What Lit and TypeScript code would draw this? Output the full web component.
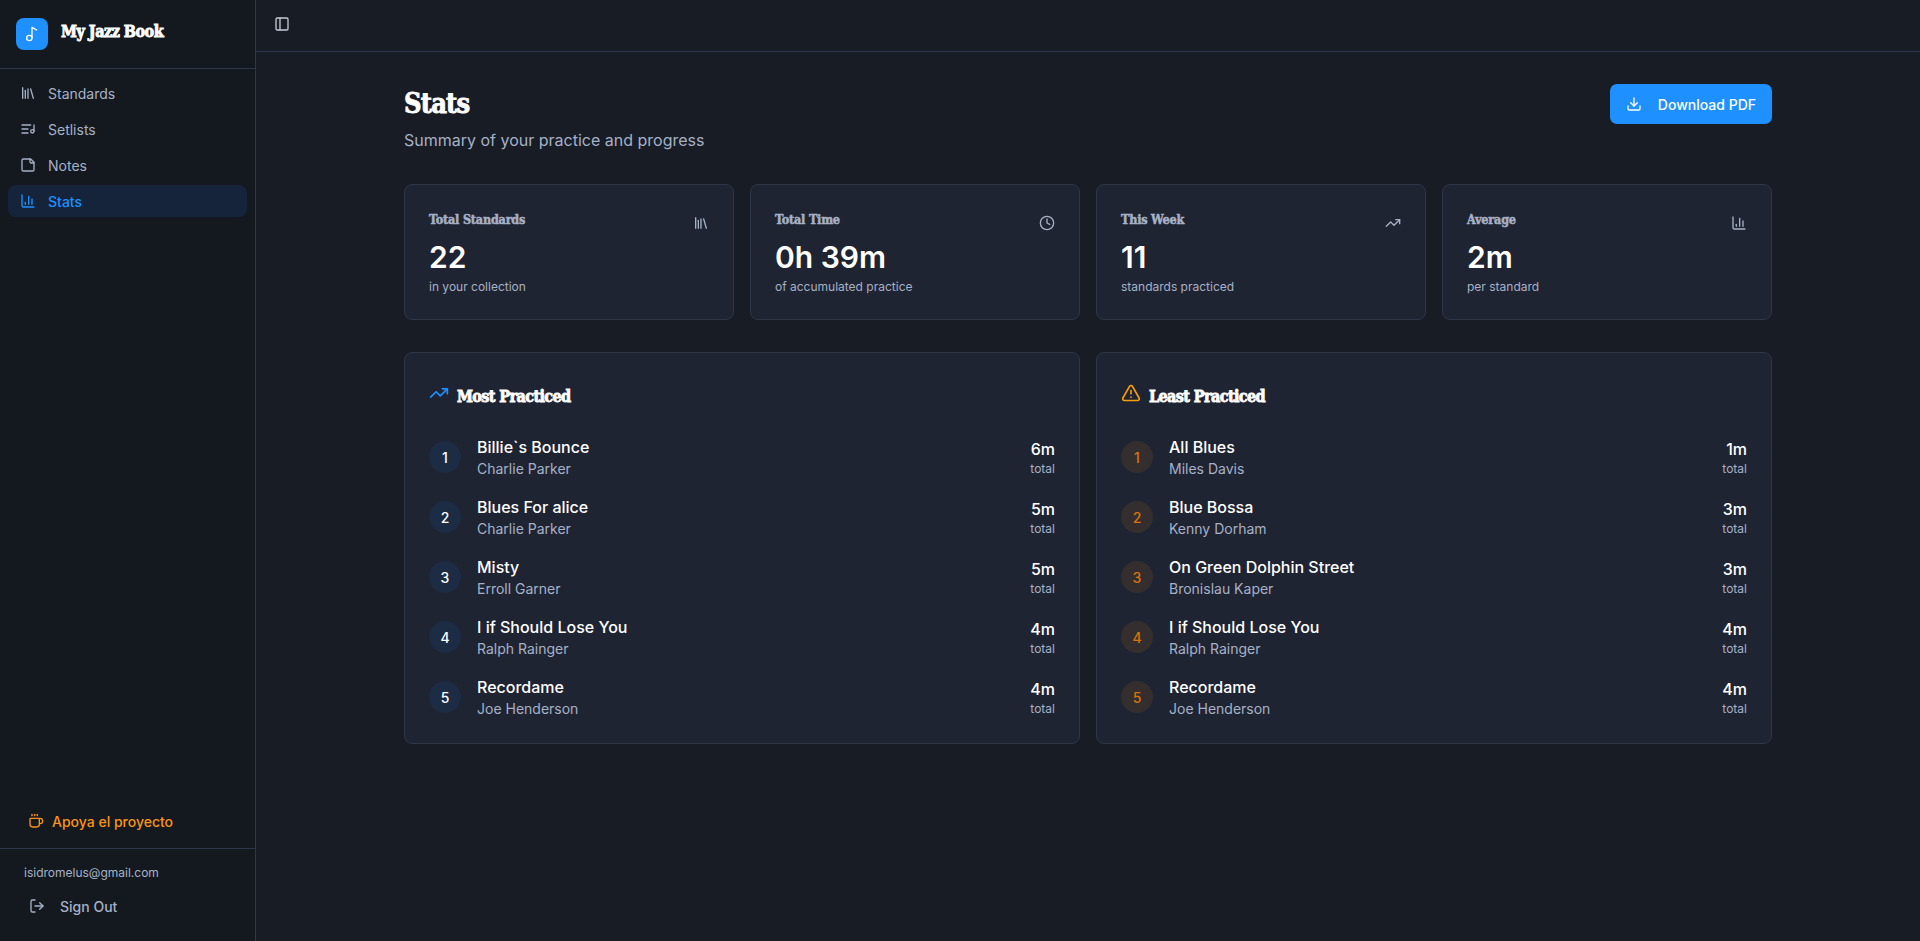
import { LitElement, html, css, svg } from 'lit';
import { customElement } from 'lit/decorators.js';

const icons: Record<string, unknown> = {
	music: svg`<circle cx="8" cy="18" r="4"/><path d="M12 18V2l7 4"/>`,
	library: svg`<path d="m16 6 4 14"/><path d="M12 6v14"/><path d="M8 8v12"/><path d="M4 4v16"/>`,
	list: svg`<path d="M21 15V6"/><path d="M18.5 18a2.5 2.5 0 1 0 0-5 2.5 2.5 0 0 0 0 5Z"/><path d="M12 12H3"/><path d="M16 6H3"/><path d="M12 18H3"/>`,
	note: svg`<path d="M16 3H5a2 2 0 0 0-2 2v14a2 2 0 0 0 2 2h14a2 2 0 0 0 2-2V8Z"/><path d="M15 3v4a2 2 0 0 0 2 2h4"/>`,
	chart: svg`<path d="M3 3v16a2 2 0 0 0 2 2h16"/><path d="M18 17V9"/><path d="M13 17V5"/><path d="M8 17v-3"/>`,
	panel: svg`<rect width="18" height="18" x="3" y="3" rx="2"/><path d="M9 3v18"/>`,
	coffee: svg`<path d="M10 2v2"/><path d="M14 2v2"/><path d="M16 8a1 1 0 0 1 1 1v8a4 4 0 0 1-4 4H7a4 4 0 0 1-4-4V9a1 1 0 0 1 1-1h14a4 4 0 1 1 0 8h-1"/><path d="M6 2v2"/>`,
	logout: svg`<path d="m16 17 5-5-5-5"/><path d="M21 12H9"/><path d="M9 21H5a2 2 0 0 1-2-2V5a2 2 0 0 1 2-2h4"/>`,
	clock: svg`<circle cx="12" cy="12" r="10"/><polyline points="12 6 12 12 16 14"/>`,
	trend: svg`<path d="M16 7h6v6"/><path d="m22 7-8.5 8.5-5-5L2 17"/>`,
	alert: svg`<path d="m21.73 18-8-14a2 2 0 0 0-3.48 0l-8 14A2 2 0 0 0 4 21h16a2 2 0 0 0 1.73-3"/><path d="M12 9v4"/><path d="M12 17h.01"/>`,
	download: svg`<path d="M21 15v4a2 2 0 0 1-2 2H5a2 2 0 0 1-2-2v-4"/><polyline points="7 10 12 15 17 10"/><line x1="12" x2="12" y1="15" y2="3"/>`,
};

const icon = (name: string, cls = '') => html`<svg class="icon ${cls}" viewBox="0 0 24 24">${icons[name]}</svg>`;

const nav = [
	{ icon: 'library', label: 'Standards' },
	{ icon: 'list', label: 'Setlists' },
	{ icon: 'note', label: 'Notes' },
	{ icon: 'chart', label: 'Stats', active: true },
];

const stats = [
	{ label: 'Total Standards', icon: 'library', value: '22', sub: 'in your collection' },
	{ label: 'Total Time', icon: 'clock', value: '0h 39m', sub: 'of accumulated practice' },
	{ label: 'This Week', icon: 'trend', value: '11', sub: 'standards practiced' },
	{ label: 'Average', icon: 'chart', value: '2m', sub: 'per standard' },
];

const most = [
	['Billie`s Bounce', 'Charlie Parker', '6m'],
	['Blues For alice', 'Charlie Parker', '5m'],
	['Misty', 'Erroll Garner', '5m'],
	['I if Should Lose You', 'Ralph Rainger', '4m'],
	['Recordame', 'Joe Henderson', '4m'],
];

const least = [
	['All Blues', 'Miles Davis', '1m'],
	['Blue Bossa', 'Kenny Dorham', '3m'],
	['On Green Dolphin Street', 'Bronislau Kaper', '3m'],
	['I if Should Lose You', 'Ralph Rainger', '4m'],
	['Recordame', 'Joe Henderson', '4m'],
];

@customElement('app-root')
export class AppRoot extends LitElement {
	static styles = css`
		:host {
			display: flex;
			height: 100vh;
			overflow: hidden;
			background: #181c25;
			color: #fff;
			font-family: Inter, "Liberation Sans", sans-serif;
		}
		* {
			box-sizing: border-box;
		}
		.icon {
			width: 16px;
			height: 16px;
			flex: none;
			fill: none;
			stroke: currentColor;
			stroke-width: 2;
			stroke-linecap: round;
			stroke-linejoin: round;
		}
		.display {
			font-family: "DejaVu Serif", "Liberation Serif", serif;
			font-stretch: condensed;
			font-weight: 700;
			-webkit-text-stroke: 0.8px currentColor;
		}

		.sidebar {
			width: 256px;
			flex: none;
			display: flex;
			flex-direction: column;
			background: #141920;
			border-right: 1px solid #2e3649;
		}
		.brand {
			display: flex;
			align-items: center;
			gap: 13px;
			height: 69px;
			padding: 0 16px;
			border-bottom: 1px solid #2e3649;
		}
		.logo {
			width: 32px;
			height: 32px;
			display: flex;
			align-items: center;
			justify-content: center;
			border-radius: 8px;
			background: #1e90ff;
		}
		.brand-name {
			font-size: 16px;
			line-height: 28px;
			letter-spacing: -0.5px;
			padding-bottom: 4px;
		}
		.nav {
			display: flex;
			flex-direction: column;
			gap: 4px;
			padding: 8px;
			flex: 1;
		}
		.nav-item {
			display: flex;
			align-items: center;
			gap: 12px;
			height: 32px;
			padding: 0 12px;
			border-radius: 8px;
			font-size: 14px;
			color: #a6b1c6;
		}
		.nav-item.active {
			background: #15243a;
			color: #1e90ff;
			font-weight: 500;
		}
		.support {
			display: flex;
			align-items: center;
			gap: 8px;
			height: 36px;
			padding: 0 28px 2px;
			margin-bottom: 8px;
			font-size: 14px;
			font-weight: 500;
			color: #f7931a;
		}
		.account {
			border-top: 1px solid #2e3649;
			padding: 16px 24px 0;
			height: 93px;
		}
		.email {
			font-size: 12px;
			line-height: 16px;
			color: #a6b1c6;
		}
		.signout {
			display: flex;
			align-items: center;
			gap: 15px;
			height: 36px;
			margin-top: 7px;
			padding-left: 5px;
			font-size: 14px;
			font-weight: 500;
			color: #a6b1c6;
		}

		.main {
			flex: 1;
			min-width: 0;
			display: flex;
			flex-direction: column;
		}
		.topbar {
			display: flex;
			align-items: center;
			height: 52px;
			padding: 0 18px 4px;
			border-bottom: 1px solid #2e3649;
			color: #c3cad6;
		}
		.content {
			width: 1368px;
			margin: 0 auto;
			padding-top: 32px;
		}
		.page-head {
			display: flex;
			justify-content: space-between;
			align-items: flex-start;
			margin-bottom: 32px;
		}
		h1 {
			margin: 0 0 8px;
			padding-top: 2px;
			height: 36px;
			font-size: 27px;
			line-height: 36px;
			letter-spacing: -0.8px;
			-webkit-text-stroke-width: 1.2px;
		}
		.subtitle {
			font-size: 16px;
			line-height: 24px;
			color: #a6b1c6;
		}
		.download {
			display: flex;
			align-items: center;
			gap: 16px;
			height: 40px;
			padding: 0 16px;
			border-radius: 7px;
			background: #1e90ff;
			font-size: 14px;
			font-weight: 500;
		}

		.stat-grid {
			display: grid;
			grid-template-columns: repeat(4, 1fr);
			gap: 16px;
			margin-bottom: 32px;
		}
		.card {
			background: #1f2433;
			border: 1px solid #2e3649;
			border-radius: 8px;
			padding: 24px;
		}
		.stat {
			height: 136px;
		}
		.stat-head {
			display: flex;
			justify-content: space-between;
			align-items: center;
			height: 22px;
			margin-bottom: 8px;
			color: #a6b1c6;
		}
		.stat-label {
			font-size: 12.5px;
			line-height: 20px;
			letter-spacing: -0.2px;
			-webkit-text-stroke-width: 0.5px;
		}
		.stat-head .icon {
			margin-top: 6px;
		}
		.stat-value {
			font-size: 30px;
			line-height: 36px;
			font-weight: 600;
		}
		.stat-sub {
			font-size: 12px;
			line-height: 16px;
			margin-top: 4px;
			color: #a6b1c6;
		}

		.panels {
			display: grid;
			grid-template-columns: repeat(2, 1fr);
			gap: 16px;
		}
		.panel-head {
			display: flex;
			align-items: center;
			gap: 8px;
			height: 34px;
			padding-top: 5px;
			margin-bottom: 24px;
			font-size: 16px;
			letter-spacing: -0.6px;
		}
		.panel-head .icon {
			width: 20px;
			height: 20px;
			margin-top: -7px;
		}
		.trend-icon {
			color: #1e90ff;
		}
		.alert-icon {
			color: #f59e0b;
		}
		.rows {
			display: flex;
			flex-direction: column;
			gap: 16px;
		}
		.row {
			display: flex;
			align-items: center;
			gap: 16px;
			height: 44px;
		}
		.rank {
			width: 32px;
			height: 32px;
			flex: none;
			display: flex;
			align-items: center;
			justify-content: center;
			border-radius: 50%;
			background: #1c2c45;
			font-size: 14px;
			font-weight: 500;
		}
		.least .rank {
			background: #342f2e;
			color: #d9730d;
		}
		.info {
			flex: 1;
			min-width: 0;
		}
		.song {
			font-size: 16px;
			line-height: 24px;
			font-weight: 500;
		}
		.artist {
			font-size: 14px;
			line-height: 20px;
			color: #a6b1c6;
		}
		.time {
			text-align: right;
		}
		.mins {
			font-size: 16px;
			line-height: 24px;
			font-weight: 500;
		}
		.total {
			font-size: 12px;
			line-height: 16px;
			color: #a6b1c6;
		}
	`;

	renderRows(rows: string[][]) {
		return html`<div class="rows">
			${rows.map(
				(r, i) => html`<div class="row">
					<div class="rank">${i + 1}</div>
					<div class="info">
						<div class="song">${r[0]}</div>
						<div class="artist">${r[1]}</div>
					</div>
					<div class="time">
						<div class="mins">${r[2]}</div>
						<div class="total">total</div>
					</div>
				</div>`
			)}
		</div>`;
	}

	render() {
		return html`
			<aside class="sidebar">
				<div class="brand">
					<div class="logo">${icon('music')}</div>
					<div class="brand-name display">My Jazz Book</div>
				</div>
				<nav class="nav">
					${nav.map(
						(n) => html`<div class="nav-item ${n.active ? 'active' : ''}">${icon(n.icon)}<span>${n.label}</span></div>`
					)}
				</nav>
				<div class="support">${icon('coffee')}<span>Apoya el proyecto</span></div>
				<div class="account">
					<div class="email">isidromelus@gmail.com</div>
					<div class="signout">${icon('logout')}<span>Sign Out</span></div>
				</div>
			</aside>
			<div class="main">
				<header class="topbar">${icon('panel')}</header>
				<main class="content">
					<div class="page-head">
						<div>
							<h1 class="display">Stats</h1>
							<div class="subtitle">Summary of your practice and progress</div>
						</div>
						<div class="download">${icon('download')}<span>Download PDF</span></div>
					</div>
					<div class="stat-grid">
						${stats.map(
							(s) => html`<div class="card stat">
								<div class="stat-head">
									<span class="stat-label display">${s.label}</span>
									${icon(s.icon)}
								</div>
								<div class="stat-value">${s.value}</div>
								<div class="stat-sub">${s.sub}</div>
							</div>`
						)}
					</div>
					<div class="panels">
						<section class="card">
							<div class="panel-head display">${icon('trend', 'trend-icon')}<span>Most Practiced</span></div>
							${this.renderRows(most)}
						</section>
						<section class="card least">
							<div class="panel-head display">${icon('alert', 'alert-icon')}<span>Least Practiced</span></div>
							${this.renderRows(least)}
						</section>
					</div>
				</main>
			</div>
		`;
	}
}
